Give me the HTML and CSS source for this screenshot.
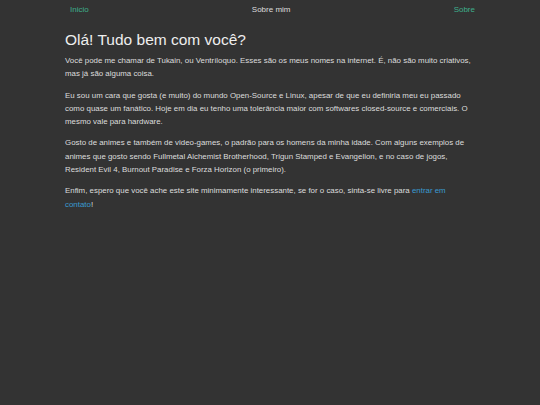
FILE: index.html
```html
<!DOCTYPE html>
<html lang="pt-BR">
<head>
    <meta charset="UTF-8">
    <meta name="viewport" content="width=device-width, initial-scale=1.0">
    <title>Sobre mim</title>
    <link rel="stylesheet" href="styles.css">
</head>
<body>
    <nav class="top-nav">
        <a href="#" class="nav-link">Inicio</a>
        <span class="nav-current">Sobre mim</span>
        <a href="#" class="nav-link">Sobre</a>
    </nav>

    <main class="about">
        <h1 class="about-heading">Olá! Tudo bem com você?</h1>

        <p>Você pode me chamar de Tukain, ou Ventríloquo. Esses são os meus nomes na internet. É, não são muito criativos, mas já são alguma coisa.</p>

        <p>Eu sou um cara que gosta (e muito) do mundo Open-Source e Linux, apesar de que eu definiria meu eu passado como quase um fanático. Hoje em dia eu tenho uma tolerância maior com softwares closed-source e comerciais. O mesmo vale para hardware.</p>

        <p>Gosto de animes e também de video-games, o padrão para os homens da minha idade. Com alguns exemplos de animes que gosto sendo Fullmetal Alchemist Brotherhood, Trigun Stamped e Evangelion, e no caso de jogos, Resident Evil 4, Burnout Paradise e Forza Horizon (o primeiro).</p>

        <p>Enfim, espero que você ache este site minimamente interessante, se for o caso, sinta-se livre para <a href="#" class="contact-link">entrar em contato</a>!</p>
    </main>
</body>
</html>
```

FILE: styles.css
```css
body {
    margin: 0;
    background: #333333;
    color: #dddddd;
    font-family: "Liberation Sans", Arial, sans-serif;
    min-height: 405px;
}

.top-nav {
    width: 410px;
    margin: 0 auto;
    padding: 5px 0 0 5px;
    box-sizing: border-box;
    display: flex;
    justify-content: space-between;
    font-size: 8px;
    line-height: 10px;
}

.nav-link {
    color: #3eae8c;
    text-decoration: none;
}

.nav-current {
    color: #dddddd;
}

.about {
    width: 410px;
    margin: 0 auto;
}

.about-heading {
    margin: 15px 0 4px;
    font-size: 15.5px;
    font-weight: 400;
    line-height: 20px;
    color: #eeeeee;
}

.about p {
    margin: 0 0 8px;
    font-size: 7.9px;
    line-height: 13.3px;
}

.contact-link {
    color: #3a9bd0;
    text-decoration: none;
}
```
